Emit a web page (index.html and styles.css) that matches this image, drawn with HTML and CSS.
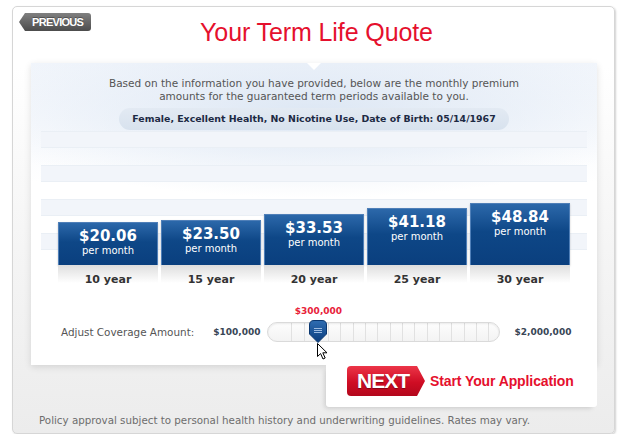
FILE: index.html
```html
<!DOCTYPE html>
<html lang="en">
<head>
  <meta charset="UTF-8">
  <title>Your Term Life Quote</title>
  <link rel="stylesheet" href="styles.css">
</head>
<body>
  <div class="frame">
    <div class="head">
      <a class="prev" href="#">PREVIOUS</a>
      <h1>Your Term Life Quote</h1>
    </div>

    <div class="card">
      <span class="notch"></span>
      <p class="intro">Based on the information you have provided, below are the monthly premium<br>amounts for the guaranteed term periods available to you.</p>
      <div class="pill">Female, Excellent Health, No Nicotine Use, Date of Birth: 05/14/1967</div>

      <div class="chart">
        <div class="bars">
          <div class="bar" style="height: 43px"><b>$20.06</b><span>per month</span></div>
          <div class="bar" style="height: 45px"><b>$23.50</b><span>per month</span></div>
          <div class="bar" style="height: 51px"><b>$33.53</b><span>per month</span></div>
          <div class="bar" style="height: 57px"><b>$41.18</b><span>per month</span></div>
          <div class="bar" style="height: 62px"><b>$48.84</b><span>per month</span></div>
        </div>
      </div>
      <div class="terms">
        <div>10 year</div>
        <div>15 year</div>
        <div>20 year</div>
        <div>25 year</div>
        <div>30 year</div>
      </div>

      <div class="coverage">
        <span class="cov-label">Adjust Coverage Amount:</span>
        <span class="cov-min">$100,000</span>
        <div class="track">
          <span class="cov-value">$300,000</span>
          <svg class="thumb" width="18" height="23" viewBox="0 0 18 23">
            <defs>
              <linearGradient id="tg" x1="0" y1="0" x2="0" y2="1">
                <stop offset="0" stop-color="#2f6db2"/>
                <stop offset="1" stop-color="#0a3c7c"/>
              </linearGradient>
            </defs>
            <path d="M5 0.5 H13 Q17.5 0.5 17.5 5 V14 L9 22.5 L0.5 14 V5 Q0.5 0.5 5 0.5 Z" fill="url(#tg)" stroke="#0a3770"/>
            <path d="M5 8.5 H13 M5 10.5 H13 M5 12.5 H13" stroke="#9dbbe0" stroke-width="1"/>
          </svg>
          <svg class="cursor" width="12" height="17" viewBox="0 0 12 17">
            <path d="M0.5 0.5 V13.5 L3.6 10.6 L6 16 L8.2 15 L5.8 9.8 H10 Z" fill="#fff" stroke="#000" stroke-width="1" stroke-linejoin="round"/>
          </svg>
        </div>
        <span class="cov-max">$2,000,000</span>
      </div>
    </div>

    <div class="next-tab">
      <a class="next" href="#">NEXT</a>
      <a class="start" href="#">Start Your Application</a>
    </div>

    <p class="note">Policy approval subject to personal health history and underwriting guidelines. Rates may vary.</p>
  </div>
</body>
</html>
```

FILE: styles.css
```css
body { margin: 0; background: #fff; font-family: "DejaVu Sans", sans-serif; }

.frame { margin: 6px 0 0 12px; width: 601px; height: 426px; border: 1px solid #d6d6d6; border-radius: 5px; box-shadow: 1px 1px 2px rgba(0,0,0,0.18); background: linear-gradient(#fff 0, #fff 60px, #f7f7f7 200px, #ececec 100%); }

.head { display: grid; grid-template-columns: 1fr auto 1fr; height: 56px; box-sizing: border-box; padding: 6px 0 0 6px; }
.prev { justify-self: start; align-self: start; display: block; width: 72px; height: 18px; box-sizing: border-box; padding-left: 13px; font: bold 11px/18px "Liberation Sans", sans-serif; letter-spacing: -0.7px; color: #fff; text-decoration: none; text-shadow: 0 -1px 0 rgba(0,0,0,0.3); background: linear-gradient(#808080, #4c4c4c); border-radius: 0 3px 3px 0; clip-path: polygon(0 50%, 6px 0, 100% 0, 100% 100%, 6px 100%); }
.head h1 { margin: 5px 0 0; font: normal 25px/28px "Liberation Sans", sans-serif; color: #e5102d; letter-spacing: -0.1px; }

.card { position: relative; height: 302px; margin: 0 17px 0 18px; background: radial-gradient(ellipse 62% 85px at 50% 50px, #dde7f4, rgba(255,255,255,0)), linear-gradient(#f1f5fb, #fff 120px); box-shadow: 0 2px 7px rgba(0,0,0,0.12); padding-top: 14px; box-sizing: border-box; }
.notch { position: absolute; top: 0; left: 50%; margin-left: -7px; border-left: 7px solid transparent; border-right: 7px solid transparent; border-top: 7px solid #fff; }
.intro { margin: 0; font-size: 10.5px; line-height: 13px; color: #555; text-align: center; }
.pill { width: fit-content; margin: 5px auto 0; padding: 0 13px; height: 22px; line-height: 22px; border-radius: 11px; background: linear-gradient(#e3eaf3, #d8e2ee); font-size: 9.4px; font-weight: bold; color: #1d2a44; }

.chart { margin: 1px 10px 0; height: 134px; background: repeating-linear-gradient(#eaeff5 0, #eaeff5 1px, #f2f5fa 1px, #f2f5fa 16px, #eaeff5 16px, #eaeff5 17px, rgba(255,255,255,0) 17px, rgba(255,255,255,0) 34px); }
.bars { display: flex; align-items: flex-end; gap: 3px; height: 100%; padding: 0 17px; }
.bar { width: 100px; box-sizing: border-box; border: 1px solid #4f7fb8; border-bottom: 0; background: linear-gradient(#2c68aa, #0e4787 45%, #0a3f7e); color: #fff; text-align: center; padding-top: 4px; box-shadow: 0 1px 2px rgba(0,0,0,0.2); }
.bar b { display: block; font-size: 15px; line-height: 18px; }
.bar span { display: block; font-size: 10px; line-height: 12px; }

.terms { display: flex; gap: 3px; margin: 0 27px; }
.terms div { width: 100px; height: 24px; padding-top: 8px; box-sizing: border-box; text-align: center; font-size: 11px; font-weight: bold; color: #333; background: linear-gradient(#dedede, rgba(255,255,255,0) 18px); }

.coverage { display: flex; align-items: center; height: 20px; margin-top: 33px; padding-left: 30px; font-size: 10.4px; color: #555; }
.cov-label { margin-right: 19px; }
.cov-min, .cov-max { font-size: 9px; font-weight: bold; color: #394656; }
.cov-min { margin-right: 7px; }
.cov-max { margin-left: 14px; }
.track { position: relative; width: 233px; height: 20px; box-sizing: border-box; border: 1px solid #dadada; border-radius: 10px; background: repeating-linear-gradient(to right, rgba(255,255,255,0) 0, rgba(255,255,255,0) 11.3px, #e1e1e1 11.3px, #e1e1e1 12.3px) 12px 0 / 210px 100% no-repeat, linear-gradient(#fdfdfd, #f3f3f3); box-shadow: inset 0 1px 2px rgba(0,0,0,0.08); }
.cov-value { position: absolute; left: 25px; top: -17px; width: 50px; text-align: center; font-size: 9px; font-weight: bold; color: #e8223a; }
.thumb { position: absolute; left: 41px; top: -3px; }
.cursor { position: absolute; left: 49px; top: 20px; }

.next-tab { position: relative; display: flex; align-items: center; width: 271px; height: 42px; margin-left: 313px; box-sizing: border-box; padding: 0 0 10px 21px; background: #fff; border-radius: 0 0 3px 3px; box-shadow: -3px 3px 5px -2px rgba(0,0,0,0.16); }
.next { display: block; width: 78px; height: 30px; padding-left: 10px; box-sizing: border-box; font: bold 21px/30px "Liberation Sans", sans-serif; letter-spacing: -1px; color: #fff; text-decoration: none; text-shadow: 0 1px 1px rgba(0,0,0,0.35); background: linear-gradient(#ec3548, #cf0d24 55%, #b3071c); border-radius: 4px 0 0 4px; clip-path: polygon(0 0, 70px 0, 100% 50%, 70px 100%, 0 100%); }
.start { margin-left: 5px; font: bold 14px "Liberation Sans", sans-serif; color: #e5102d; text-decoration: none; letter-spacing: -0.1px; }

.note { margin: 7px 0 0 26px; font-size: 10.3px; color: #6d6d6d; }
```
